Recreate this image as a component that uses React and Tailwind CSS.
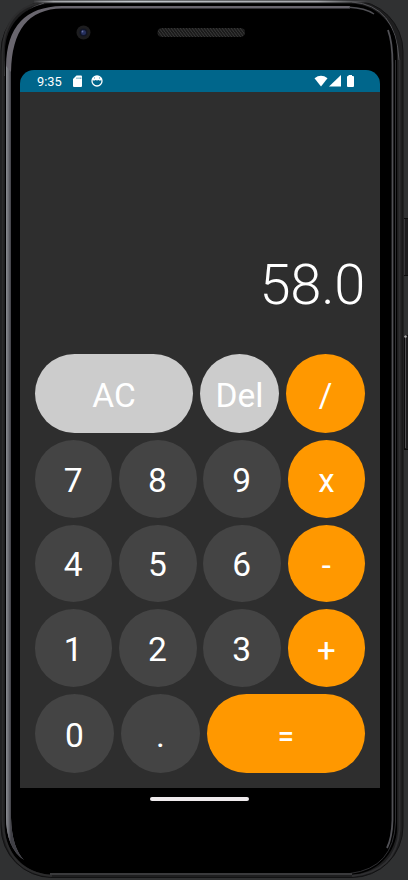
const KEY =
  "flex items-center justify-center rounded-full leading-none text-white";
const DIGIT = "bg-[#444444] text-[33.5px]";
const OP = "bg-[#ff9800] text-[33px]";
const EQUALS = "bg-[#ff9800] text-[29px] font-medium";
const UTIL = "bg-[#cccccc] text-[33.5px]";
const TALL = "h-[79px] w-[79px] pt-[5px]";
const WIDE = "h-[79px] w-[158px] pt-[5px]";
const ROUND = "h-[77.3px] w-[77.3px] pt-[3px] pr-px";
const ROUND_OP = "h-[77.3px] w-[77.3px] pt-[4px]";

function Key({ label, tone, size }) {
  return <button className={`${KEY} ${tone} ${size}`}>{label}</button>;
}

const ROWS = [
  ["7", "8", "9", "x"],
  ["4", "5", "6", "-"],
  ["1", "2", "3", "+"],
];

function Chassis() {
  return (
    <svg className="absolute inset-0" width="408" height="880" viewBox="0 0 408 880" fill="none" aria-hidden="true">
      <defs>
        <linearGradient id="rim" gradientUnits="userSpaceOnUse" x1="34" y1="0" x2="368" y2="0">
          <stop offset="0" stopColor="#3a3a3c" />
          <stop offset="0.06" stopColor="#a4a6aa" />
          <stop offset="0.3" stopColor="#c2c7cc" />
          <stop offset="0.85" stopColor="#a4a6aa" />
          <stop offset="1" stopColor="#303032" />
        </linearGradient>
        <linearGradient id="sheen" gradientUnits="userSpaceOnUse" x1="6" y1="0" x2="11" y2="0">
          <stop offset="0" stopColor="#8b8d92" />
          <stop offset="0.5" stopColor="#6c6d73" />
          <stop offset="1" stopColor="#3f3f45" />
        </linearGradient>
        <pattern id="mesh" width="3" height="4" patternUnits="userSpaceOnUse">
          <rect width="3" height="4" fill="#1b1b1b" />
          <path d="M0 0l1.500 2M1.500 2l1.500 2" stroke="#404040" strokeWidth="0.800" />
        </pattern>
      </defs>
      <rect x="1" y="0.500" width="402" height="877" rx="51" fill="#1e1e1f" stroke="#121213" />
      <path d="M2.500 820V54Q4 2 54 1.500" stroke="#2c2c2d" strokeWidth="2" />
      <path d="M34 1.500H368" stroke="url(#rim)" strokeWidth="2.200" />
      <path d="M5 76Q4 14 44 3" stroke="#56565a" />
      <path d="M352 2Q396 5 399 60" stroke="#56565a" />
      <rect x="5" y="3.500" width="392" height="871" rx="47" fill="#000" />
      <path d="M350 8.500H62Q12 9 11 72V818Q12 848 24 860Q6 848 6 816V66Q7 7 62 6.100H350Z" fill="#69666e" />
      <path d="M349 7.300Q365 8 374 14" stroke="#505055" strokeWidth="1.400" />
      <path d="M6 66V816Q6 848 24 860Q12 848 11 818V72Z" fill="url(#sheen)" />
      <path d="M388 30Q392.500 42 392.500 64V820Q392 838 387 848" stroke="#515156" strokeWidth="1.800" />
      <path d="M395.500 60V822Q394 868 350 873.500" stroke="#2f2f32" />
      <path d="M399.500 60V830Q396 872 352 876" stroke="#2f2f31" strokeWidth="2" />
      <path d="M2.500 820Q5 872 52 876" stroke="#2c2c2d" strokeWidth="2" />
      <path d="M50 874H352" stroke="#3a3a3c" strokeWidth="2" />
      <rect x="404.500" y="218.500" width="5" height="57" fill="#1c1c1d" stroke="#0c0c0c" />
      <path d="M404.500 219V275" stroke="#363638" />
      <rect x="404.500" y="335.500" width="5" height="114" fill="#1c1c1d" stroke="#0c0c0c" />
      <path d="M405.500 336V448" stroke="#505052" />
      <circle cx="405.500" cy="336.500" r="1.300" fill="#aaa" />
      <circle cx="83.500" cy="32.500" r="7" fill="#1d1d1f" />
      <circle cx="83.500" cy="32.500" r="4" fill="#111526" />
      <circle cx="83.500" cy="32.500" r="2.500" fill="#26305e" />
      <circle cx="82.500" cy="31.500" r="0.900" fill="#6670a0" />
      <rect x="157.500" y="28" width="87.500" height="9" rx="4.500" fill="url(#mesh)" />
    </svg>
  );
}

function StatusBar() {
  return (
    <div className="flex h-[22px] items-center rounded-t-[14px] bg-[#00668b] pr-[26px] pl-[17px] text-white">
      <span className="w-[35px] pt-[2px] text-[12.8px] leading-none">9:35</span>
      <svg width="11" height="13" viewBox="0 0 11 13" className="mt-px">
        <path d="M4.500 0.500H9Q10 0.500 10 1.500V11Q10 12 9 12H2Q1 12 1 11V4Z" fill="#fff" />
        <path d="M5 2.500V4M7 2.500V4M8.800 2.500V4" stroke="#00668b" strokeWidth="0.700" />
      </svg>
      <svg width="12" height="12" viewBox="0 0 12 12" className="ml-[8px]">
        <circle cx="6" cy="6" r="5" fill="none" stroke="#fff" strokeWidth="1.300" />
        <path d="M1 4.500Q1.500 1 6 1T11 4.500L9 5.700L7.500 4.900L6 5.500L4.500 4.900L3 5.700Z" fill="#fff" />
        <path d="M3 3H4M8 3H9" stroke="#00668b" strokeWidth="0.700" />
      </svg>
      <svg width="40" height="13" viewBox="0 0 40 13" className="ml-auto mt-px" fill="#fff">
        <path d="M0.500 3.200Q7 -1.500 13.500 3.200L7 11.500Z" />
        <path d="M15 11.500L27 0V11.500Z" />
        <path d="M34.500 0H38V1H39Q40 1 40 2V11Q40 12 39 12H34Q33 12 33 11V2Q33 1 34 1H34.500Z" />
      </svg>
    </div>
  );
}

export default function App() {
  return (
    <div className="relative h-[880px] w-[408px] overflow-hidden bg-[#303132] font-['Roboto',sans-serif]">
      <Chassis />
      <div className="relative flex h-full flex-col items-center pt-[70px] pr-2">
        <div className="flex h-[718px] w-[360px] flex-col">
          <StatusBar />
          <main className="flex flex-1 flex-col bg-[#2e2e2e] px-[15px] pb-[15px]">
            <div className="flex flex-1 items-end justify-end pb-[39px] text-[56px] leading-[60px] font-light tracking-[-0.3px] text-white">
              58.0
            </div>
            <div className="flex flex-col gap-[7.3px]">
              <div className="flex justify-between">
                <Key label="AC" tone={UTIL} size={WIDE} />
                <Key label="Del" tone={UTIL} size={TALL} />
                <Key label="/" tone={OP} size={TALL} />
              </div>
              {ROWS.map((row) => (
                <div key={row[0]} className="flex justify-between">
                  {row.map((label, i) => (
                    <Key key={label} label={label} tone={i === 3 ? OP : DIGIT} size={i === 3 ? ROUND_OP : ROUND} />
                  ))}
                </div>
              ))}
              <div className="flex justify-between">
                <Key label="0" tone={DIGIT} size={TALL} />
                <Key label="." tone={DIGIT} size={TALL} />
                <Key label="=" tone={EQUALS} size={WIDE} />
              </div>
            </div>
          </main>
        </div>
        <div className="mt-[9px] mr-px h-1 w-[99px] rounded-full bg-[#eeeaec]" />
      </div>
    </div>
  );
}
